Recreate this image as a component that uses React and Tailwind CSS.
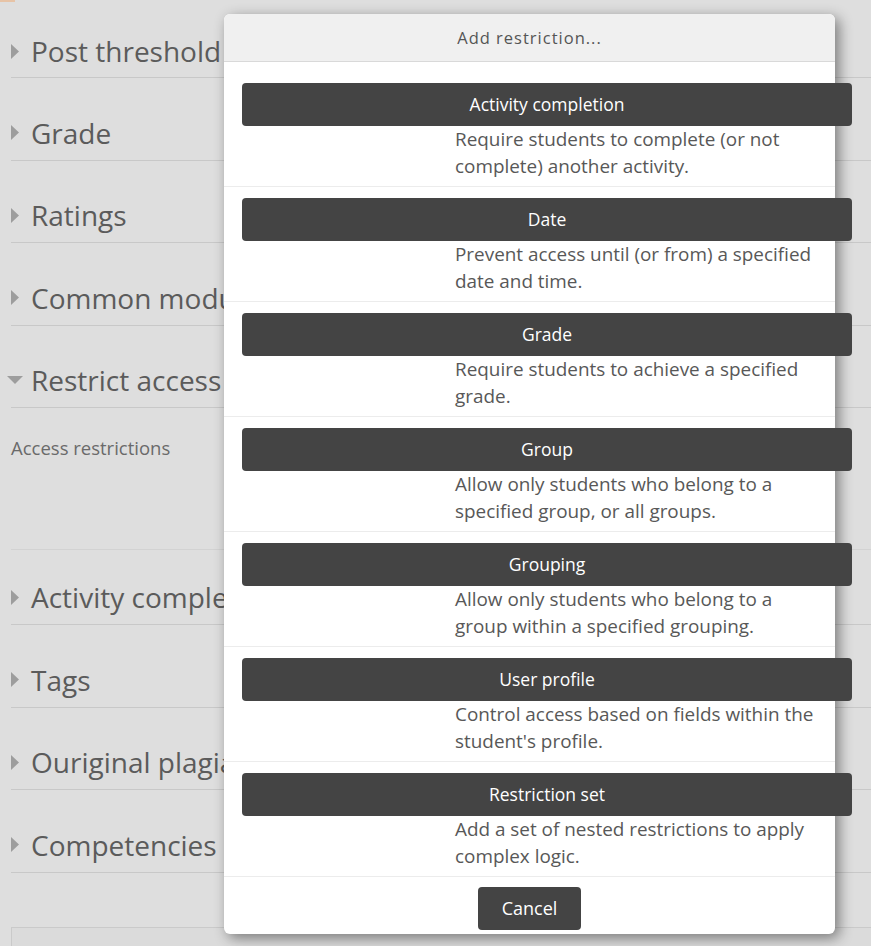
import React from 'react';

const sections = [
  { title: 'Post threshold for blocking', first: true },
  { title: 'Grade' },
  { title: 'Ratings' },
  { title: 'Common module settings' },
];

const lowerSections = ['Tags', 'Ouriginal plagiarism plugin settings', 'Competencies'];

const options = [
  { label: 'Activity completion', desc: ['Require students to complete (or not', 'complete) another activity.'] },
  { label: 'Date', desc: ['Prevent access until (or from) a specified', 'date and time.'] },
  { label: 'Grade', desc: ['Require students to achieve a specified', 'grade.'] },
  { label: 'Group', desc: ['Allow only students who belong to a', 'specified group, or all groups.'] },
  { label: 'Grouping', desc: ['Allow only students who belong to a', 'group within a specified grouping.'] },
  { label: 'User profile', desc: ['Control access based on fields within the', "student's profile."] },
  { label: 'Restriction set', desc: ['Add a set of nested restrictions to apply', 'complex logic.'] },
];

const CaretRight = () => (
  <svg width="8" height="15" viewBox="0 0 8 15" className="shrink-0">
    <polygon points="0,0 8,7.5 0,15" fill="#9d9d9d" />
  </svg>
);

const CaretDown = () => (
  <svg width="16" height="8" viewBox="0 0 16 8" className="shrink-0 -ml-[4px]">
    <polygon points="0,0 16,0 8,8" fill="#9d9d9d" />
  </svg>
);

const Heading = ({ title, open, className }) => (
  <div className={`flex items-center border-b border-[#c8c8c8] ${className}`}>
    <div className="w-[20px] shrink-0 flex">
      {open ? <CaretDown /> : <CaretRight />}
    </div>
    <span className="text-[28px] leading-[30px] text-[#5b5b5b] whitespace-nowrap">{title}</span>
  </div>
);

export default function App() {
  return (
    <div
      className="relative w-[871px] h-[946px] overflow-hidden bg-[#dedede]"
      style={{ fontFamily: '"Open Sans", "Liberation Sans", sans-serif' }}
    >
      <div className="absolute left-0 top-0 w-[15px] h-[2px] bg-[#e7c3a6]" />

      <div className="pl-[11px]">
        {sections.map((s) => (
          <Heading
            key={s.title}
            title={s.title}
            className={s.first ? 'pt-[36px] pb-[11px]' : 'pt-[39.5px] pb-[12px]'}
          />
        ))}
        <Heading title="Restrict access" open className="pt-[39.5px] pb-[12px]" />

        <div className="border-b border-[#d2d2d2] pt-[28px] pb-[88px]">
          <span className="text-[18.5px] leading-[24px] text-[#6a6a6a]">Access restrictions</span>
        </div>

        <Heading title="Activity completion" className="pt-[32px] pb-[12px]" />
        {lowerSections.map((t) => (
          <Heading key={t} title={t} className="pt-[39.5px] pb-[12px]" />
        ))}

        <div className="mt-[54.5px] h-[40px] border-t border-l border-[#cacaca] bg-[#dbdbdb]" />
      </div>

      {/* modal */}
      <div className="absolute left-[224px] top-[14px] w-[611px] bg-white rounded-[6px] shadow-[4px_4px_14px_rgba(0,0,0,0.45)]">
        <div className="h-[48px] bg-[#f0f0f0] rounded-t-[6px] border-b border-[#d9d9d9] flex items-center justify-center">
          <span className="text-[16.5px] tracking-[1px] text-[#555] mt-[2px]">Add restriction...</span>
        </div>

        <div className="pt-[10px]">
          {options.map((o) => (
            <div key={o.label} className="border-b border-[#ececec] pt-[11px] pb-[6px]">
              <button className="ml-[18px] w-[610px] h-[43px] bg-[#444] rounded-[4px] text-white text-[17.5px] font-medium flex items-center justify-center">
                {o.label}
              </button>
              <div className="ml-[231px] text-[18.9px] leading-[27px] text-[#585858]">
                {o.desc.map((line) => (
                  <div key={line} className="whitespace-nowrap">{line}</div>
                ))}
              </div>
            </div>
          ))}
        </div>

        <div className="pt-[10px] pb-[4px] flex justify-center">
          <button className="w-[103px] h-[43px] bg-[#444] rounded-[4px] text-white text-[18px] font-medium flex items-center justify-center">
            Cancel
          </button>
        </div>
      </div>
    </div>
  );
}
